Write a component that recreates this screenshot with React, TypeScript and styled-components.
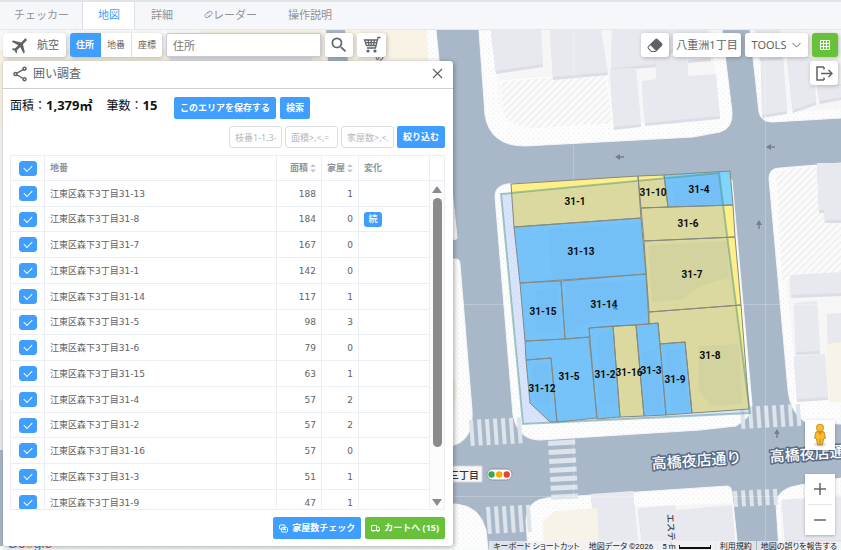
import React from "react";
import styled, { createGlobalStyle, css } from "styled-components";
import { MdFlight, MdSearch, MdOutlineShare } from "react-icons/md";
import { BsEraserFill } from "react-icons/bs";

const BLUE = "#409eff";
const GREEN = "#67c23a";
const LINE = "#ebeef5";

const GlobalStyle = createGlobalStyle`
  * { box-sizing: border-box; }
  html, body, #root { height: 100%; }
  body {
    margin: 0;
    overflow: hidden;
    font-family: "Noto Sans", "Noto Sans CJK JP", sans-serif;
    color: #606266;
  }
  button, input { font-family: inherit; margin: 0; }
`;

const Page = styled.div`
  height: 100%;
  display: flex;
  flex-direction: column;
`;

const Tabs = styled.nav`
  display: flex;
  flex: none;
  height: 30px;
  background: #f5f7fa;
  border-top: 2px solid #e1e4e9;
  border-bottom: 1px solid #e4e7ed;
`;

const Tab = styled.button<{ $active?: boolean }>`
  display: flex;
  align-items: center;
  height: 27px;
  padding: 0 14px 2px 15px;
  border: 0 solid #dcdfe6;
  border-width: 0 1px;
  border-color: ${(p) => (p.$active ? "#dcdfe6" : "transparent")};
  background: ${(p) => (p.$active ? "#fff" : "transparent")};
  color: ${(p) => (p.$active ? BLUE : "#909399")};
  font-size: 11px;
  line-height: 16px;
  &:first-child { padding-left: 13px; padding-right: 12px; }
`;

const MapArea = styled.main`
  position: relative;
  flex: 1;
  min-height: 0;
  overflow: hidden;
  display: flex;
  flex-direction: column;
`;

const MapCanvas = styled.svg`
  position: absolute;
  inset: 0;
  width: 100%;
  height: 100%;
`;

const Toolbar = styled.div`
  position: relative;
  display: flex;
  align-items: flex-start;
  gap: 4px;
  padding: 3px 3px 4px;
`;

const Spacer = styled.div`
  flex: 1;
`;

const ToolButton = styled.button<{ $w: number; $green?: boolean }>`
  display: flex;
  align-items: center;
  justify-content: center;
  gap: 6px;
  flex: none;
  width: ${(p) => p.$w}px;
  height: 24px;
  padding: 0;
  border: 0;
  border-radius: 3px;
  background: ${(p) => (p.$green ? GREEN : "#fff")};
  color: #606266;
  font-size: 11px;
  line-height: 16px;
  white-space: nowrap;
  box-shadow: 1px 1px 4px rgba(0, 0, 0, 0.25);
`;

const Modes = styled.div`
  display: flex;
  flex: none;
  height: 24px;
  border-radius: 3px;
  overflow: hidden;
  background: #fff;
  box-shadow: 1px 1px 4px rgba(0, 0, 0, 0.25);
`;

const Mode = styled.label`
  display: flex;
  align-items: center;
  justify-content: center;
  width: 31px;
  border-right: 1px solid #dcdfe6;
  font-size: 9px;
  line-height: 12px;
  input { appearance: none; width: 0; height: 0; }
  &:last-child { width: 30px; border-right: 0; }
  &:has(input:checked) { background: ${BLUE}; color: #fff; font-weight: 700; border-color: ${BLUE}; }
`;

const SearchBox = styled.input`
  width: 155px;
  height: 24px;
  padding: 0 6px;
  border: 1px solid #c9ccd2;
  border-radius: 2px;
  background: #fff;
  font-size: 11px;
  outline: none;
  box-shadow: 1px 1px 4px rgba(0, 0, 0, 0.25);
  &::placeholder { color: #757575; }
`;

const Workspace = styled.div`
  position: relative;
  flex: 1;
  min-height: 0;
  display: flex;
  justify-content: space-between;
  padding: 0 3px 4px;
`;

const Panel = styled.section`
  display: flex;
  flex-direction: column;
  width: 450px;
  max-width: 90%;
  background: #fff;
  border-radius: 3px;
  box-shadow: 1px 1px 5px rgba(0, 0, 0, 0.35);
`;

const PanelHead = styled.header`
  display: flex;
  align-items: center;
  gap: 4px;
  flex: none;
  height: 28px;
  padding: 0 10px 2px 8px;
  border-bottom: 1px solid #cfcfcf;
`;

const PanelTitle = styled.h2`
  flex: 1;
  margin: 0;
  font-size: 12px;
  line-height: 18px;
  font-weight: 400;
`;

const IconButton = styled.button`
  display: flex;
  padding: 0;
  border: 0;
  background: none;
  color: #606266;
`;

const Summary = styled.div`
  display: flex;
  align-items: center;
  padding: 7px 7px 0;
  color: #111;
  gap: 4px;
`;

const Totals = styled.p`
  width: 160px;
  margin: 0;
  padding-bottom: 4px;
  display: flex;
  gap: 14px;
  font-size: 12px;
  line-height: 18px;
  white-space: nowrap;
  b { font-size: 13px; }
`;

const Action = styled.button<{ $green?: boolean }>`
  display: flex;
  align-items: center;
  justify-content: center;
  gap: 4px;
  flex: none;
  height: 22px;
  padding: 0 6px;
  border: 0;
  border-radius: 2px;
  background: ${(p) => (p.$green ? GREEN : BLUE)};
  color: #fff;
  font-size: 9px;
  line-height: 12px;
  font-weight: 700;
  white-space: nowrap;
`;

const Filters = styled.form`
  display: flex;
  justify-content: flex-end;
  gap: 3px;
  padding: 7px 8px;
`;

const FilterInput = styled.input`
  width: 53px;
  height: 22px;
  padding: 0 5px;
  border: 1px solid #dcdfe6;
  border-radius: 3px;
  font-size: 9px;
  outline: none;
  &::placeholder { color: #b4b8c0; }
`;

const TableFrame = styled.div`
  flex: 1;
  min-height: 0;
  display: flex;
  margin: 0 8px 0 7px;
  border: 1px solid ${LINE};
  overflow: hidden;
`;

const Table = styled.table`
  flex: 1;
  height: max-content;
  border-collapse: separate;
  border-spacing: 0;
  table-layout: fixed;
  font-family: "DejaVu Sans", "Noto Sans CJK JP", sans-serif;
  font-size: 9px;
  line-height: 12px;
  tr { height: 26px; }
  thead tr, tbody tr:nth-child(4n + 2) { height: 25px; }
`;

const cell = css<{ $right?: boolean }>`
  padding: 0 5px;
  border-right: 1px solid ${LINE};
  border-bottom: 1px solid ${LINE};
  text-align: ${(p) => (p.$right ? "right" : "left")};
  white-space: nowrap;
  overflow: hidden;
  vertical-align: middle;
`;

const Th = styled.th<{ $right?: boolean }>`
  ${cell}
  color: #909399;
  font-weight: 700;
  button {
    display: inline-flex;
    align-items: center;
    gap: 2px;
    padding: 0;
    border: 0;
    background: none;
    color: inherit;
    font-size: 9px;
    line-height: 12px;
    font-weight: 700;
  }
`;

const Td = styled.td<{ $right?: boolean }>`
  ${cell}
`;

const Tick = styled.input`
  appearance: none;
  display: grid;
  place-items: center;
  width: 18px;
  height: 15px;
  margin: 0 auto !important;
  border-radius: 3px;
  background: #fff;
  border: 1px solid #dcdfe6;
  &:checked { background: ${BLUE}; border-color: ${BLUE}; }
  &:checked::after {
    content: "";
    width: 7px;
    height: 4px;
    border: solid #fff;
    border-width: 0 0 1px 1px;
    transform: translateY(-1px) rotate(-45deg);
  }
`;

const Tag = styled.span`
  display: block;
  width: 18px;
  height: 15px;
  border-radius: 3px;
  background: ${BLUE};
  color: #fff;
  font-size: 9px;
  line-height: 14px;
  font-weight: 500;
  text-align: center;
`;

const ScrollBar = styled.div`
  flex: none;
  display: flex;
  flex-direction: column;
  align-items: center;
  width: 14px;
  padding-bottom: 3px;
  background: #fcfcfd;
`;

const ScrollCap = styled.div`
  width: 100%;
  height: 25px;
  background: #fff;
  border-bottom: 1px solid ${LINE};
`;

const ScrollArrow = styled.div<{ $down?: boolean }>`
  margin: 5px 0;
  border: solid transparent;
  border-width: 0 5px;
  ${(p) => (p.$down ? "border-top: 7px solid #8b8b8b; margin-bottom: 0;" : "border-bottom: 7px solid #8b8b8b;")}
`;

const ScrollTrack = styled.div`
  flex: 1;
  width: 9px;
`;

const ScrollThumb = styled.div`
  height: 84%;
  border-radius: 5px;
  background: #8b8b8b;
`;

const PanelFoot = styled.footer`
  display: flex;
  justify-content: flex-end;
  gap: 4px;
  padding: 7px 8px;
`;

const SideControls = styled.div`
  display: flex;
  flex-direction: column;
  align-items: flex-end;
  padding-bottom: 11px;
`;

const MapButton = styled.button`
  display: flex;
  align-items: center;
  justify-content: center;
  width: 30px;
  height: 30px;
  margin-right: 3px;
  padding: 0;
  border: 0;
  background: #fff;
  box-shadow: 0 1px 3px rgba(0, 0, 0, 0.25);
`;

const ZoomGroup = styled.div`
  margin: 24px 3px 0 0;
  background: #fff;
  box-shadow: 0 1px 3px rgba(0, 0, 0, 0.25);
  ${MapButton} { margin: 0; box-shadow: none; background: none; }
  hr { margin: 0 3px; border: 0; border-top: 1px solid #e6e6e6; }
`;

const Credits = styled.div`
  position: absolute;
  right: 0;
  bottom: 0;
  display: flex;
  gap: 1px;
  height: 9px;
  overflow: hidden;
  color: #222;
  font-family: Roboto, "Noto Sans CJK JP", sans-serif;
  font-size: 8px;
  line-height: 12px;
  font-feature-settings: "palt";
  white-space: nowrap;
`;

const Credit = styled.span`
  display: flex;
  gap: 3px;
  padding: 0 4px;
  background: rgba(240, 242, 245, 0.75);
  a, button { color: inherit; font: inherit; font-feature-settings: inherit; text-decoration: none; border: 0; padding: 0; background: none; }
`;

const ScaleLine = styled.i`
  width: 32px;
  height: 4px;
  margin: 4px 0 0;
  border: solid #111;
  border-width: 0 1px 2px;
`;

/* ---------- map ---------- */

type Parcel = { id: string; pts: string; x: number; y: number; yellow?: boolean };

const parcels: Parcel[] = [
  { id: "31-1", pts: "511,184 638,176 641,218 514,227", x: 575, y: 201, yellow: true },
  { id: "31-10", pts: "638,176 664,175 668,207 641,208", x: 653, y: 192, yellow: true },
  { id: "31-4", pts: "664,175 730,171 733,205 668,207", x: 699, y: 189 },
  { id: "31-6", pts: "641,208 733,205 735,237 644,241", x: 688, y: 223, yellow: true },
  { id: "31-13", pts: "514,227 641,218 646,274 520,283", x: 581, y: 251 },
  { id: "31-7", pts: "644,241 735,237 741,305 649,312", x: 692, y: 274, yellow: true },
  { id: "31-15", pts: "520,283 561,281 565,339 525,341", x: 543, y: 311 },
  { id: "31-14", pts: "561,281 646,274 649,324 589,328 590,337 565,339", x: 604, y: 304 },
  { id: "31-8", pts: "649,312 741,305 749,409 692,413 685,342 660,344 658,323 649,324", x: 710, y: 355, yellow: true },
  { id: "31-5", pts: "525,341 565,339 589,337 597,418 557,422 551,358 526,360", x: 569, y: 376 },
  { id: "31-12", pts: "526,360 551,358 557,422 550,422 530,403", x: 542, y: 388 },
  { id: "31-2", pts: "589,328 613,326 620,417 597,419", x: 605, y: 374 },
  { id: "31-16", pts: "613,326 636,325 644,416 620,417", x: 629, y: 372, yellow: true },
  { id: "31-3", pts: "636,325 658,323 666,415 644,416", x: 651, y: 370 },
  { id: "31-9", pts: "660,344 685,342 692,413 666,415", x: 675, y: 379 },
];

const blocks = [
  "M0 30H436L457 238Q457 240 450 240H0Z",
  "M0 259H456Q460 259 460 264L472 410Q474 442 450 446H0Z",
  "M0 504H456Q480 506 486 530L488 550H0Z",
  "M479 30L485 115Q490 146 525 146L693 137L720 132Q733 128 732 112L722 30Z",
  "M750 30L759 112Q761 122 772 122L841 118V30Z",
  "M495 196Q495 186 507 184L725 175L732 180L752 405Q752 417 736 426L700 430L540 440Q518 440 513 415Z",
  "M769 178Q769 168 780 168L841 163V424L805 422Q790 412 788 390Z",
  "M528 550L526 520Q527 500 547 498L728 486Q731 486 732 492L738 550Z",
  "M779 550L776 504Q777 488 800 485L841 478V550Z",
];

const lots = [
  "M494 30L500 105Q505 128 530 129L715 118L719 110L711 30Z",
  "M757 30L764 113L841 109V30Z",
  "M776 172L841 167V400L798 400Z",
  "M597 508L732 503L736 550H597Z",
  "M782 550L780 500L841 493V550Z",
];

const buildings = [
  "491,30 541,30 543,64 496,71",
  "550,30 601,30 608,72 553,77",
  "612,30 693,30 657,64 611,68",
  "610,69 636,68 641,124 614,127",
  "655,56 687,55 688,76 716,74 720,116 645,123 642,81 657,79",
  "687,30 708,30 711,58 688,60",
  "761,55 783,55 787,111 762,115",
  "755,30 780,30 783,57 760,58",
  "787,57 813,57 816,102 793,110",
  "817,84 841,84 841,97 820,101",
  "817,163 841,163 841,220 825,220 824,210 819,210",
  "790,275 841,272 841,293 791,295",
  "794,303 817,301 820,351 796,352",
  "827,314 841,313 841,343 828,343",
  "794,356 825,354 828,397 797,399",
  "591,494 633,491 639,550 597,550",
  "638,508 675,505 676,510 732,505 736,550 643,550",
  "782,500 841,496 841,540 785,540",
  "170,57 312,57 312,90 170,90",
];

const innerBuildings = [
  "549,229 640,223 645,272 552,286",
  "536,290 558,288 560,331 537,332",
  "590,322 648,319 648,280 566,284 565,334",
  "648,245 727,241 729,278 703,285 682,300 652,302",
  "698,346 739,344 742,404 712,406 699,392",
  "598,334 612,330 617,404 599,405",
  "665,351 680,350 690,410 672,412",
  "642,352 656,350 664,412 646,413",
  "672,182 720,175 722,203 674,206",
  "532,366 548,364 550,408 534,400",
];

function zebra(x: number, y: number, n: number, step: number, w: number, h: number, slope: number) {
  return Array.from({ length: n }, (_, i) => (
    <rect key={`${x}-${y}-${i}`} x={x + i * step} y={y + i * slope} width={w} height={h} transform={`rotate(-4 ${x + i * step} ${y})`} />
  ));
}

const arrows: [number, number, number][] = [
  [620, 157, 180],
  [771, 147, 180],
  [759, 225, -90],
  [777, 434, -90],
];

const GoogleLetters: [string, string][] = [
  ["G", "#4285f4"], ["o", "#ea4335"], ["o", "#fbbc05"], ["g", "#4285f4"], ["l", "#34a853"], ["e", "#ea4335"],
];

function CityMap() {
  return (
    <MapCanvas viewBox="0 30 841 520" preserveAspectRatio="xMidYMid slice" role="img" aria-label="地図">
      <defs>
        <pattern id="dots" width="5" height="5" patternUnits="userSpaceOnUse">
          <rect width="5" height="5" fill="#fdfdfd" />
          <circle cx="1" cy="1" r="0.6" fill="#e3e9ea" />
          <circle cx="3.5" cy="3.5" r="0.6" fill="#e3e9ea" />
        </pattern>
        <pattern id="hatch" width="5" height="5" patternUnits="userSpaceOnUse" patternTransform="rotate(45)">
          <rect width="5" height="5" fill="#fbfbfb" />
          <rect width="1.5" height="5" fill="#ededed" />
        </pattern>
      </defs>
      <rect x="0" y="30" width="841" height="520" fill="#a9b8c9" />
      {blocks.map((d) => <path key={d} d={d} fill="url(#dots)" stroke="#f4f6f7" strokeWidth="1" />)}
      {lots.map((d) => <path key={d} d={d} fill="#f6f6f6" />)}
      <path d="M0 50H200V30H427L429 75H453V125H0Z" fill="#f9f3e6" />
      <path d="M0 125H3V400H0Z" fill="#f5f5f5" />
      <path d="M0 400H3V450H0Z" fill="#e8e9ef" />
      <path d="M0 480H3V546H0Z" fill="#a9b8c9" />
      <path d="M326 30H345L348 62H328Z" fill="#a9b8c9" />
      <path d="M453 375L457 390L453 415Z" fill="#f9f3e6" />
      <path d="M500 81L606 73L613 124L530 129Q503 125 502 108Z" fill="url(#hatch)" stroke="#fff" />
      <path d="M776 172L816 165L819 212L824 222L841 222V272L782 281Z" fill="url(#hatch)" />
      {buildings.map((p) => (
        <g key={p}>
          <polygon points={p} fill="#dcdee7" transform="translate(0 3)" />
          <polygon points={p} fill="#e8e9ef" />
        </g>
      ))}
      <polygon points="542,522 555,511 597,508 599,550 545,550" fill="#f8f3e8" />
      <polygon points="826,344 841,342 841,402 829,402" fill="#f8f3e8" />
      <g fill="#dde4ec">
        {zebra(469, 420, 7, 8, 4, 26, -0.4)}
        {zebra(740, 407, 8, 8, 4, 22, -0.4)}
        {zebra(486, 507, 6, 8, 4, 27, -0.4)}
        {zebra(733, 491, 6, 8, 4, 16, -0.4)}
        {Array.from({ length: 7 }, (_, i) => (
          <rect key={i} x={548 + i * 0.5} y={441 + i * 9} width="27" height="5" transform={`rotate(-3 ${548} ${441 + i * 9})`} />
        ))}
      </g>
      <path d="M573.500 30V550M765.500 30V550M450 304.500H841M450 496.500H841" stroke="#fff" strokeOpacity="0.22" />

      {parcels.map((p) => (
        <polygon key={p.id} points={p.pts} fill={p.yellow ? "#ffee85" : "#7dd3fb"} fillOpacity="0.97" />
      ))}
      {innerBuildings.map((p) => <polygon key={p} points={p} fill="#4f7fa0" fillOpacity="0.05" />)}
      <polygon points="501,194 719,173 750,413 523,424" fill="#4a82f8" fillOpacity="0.2" />
      <polygon points="501,194 719,173 750,413 523,424" fill="none" stroke="#3f8f7f" strokeOpacity="0.45" strokeWidth="2" />
      {parcels.map((p) => (
        <polygon key={p.id} points={p.pts} fill="none" stroke="#85897f" strokeWidth="1" />
      ))}
      <g fontFamily="Roboto, sans-serif" fontWeight="700" fontSize="10" fill="#0b0b0b" textAnchor="middle">
        {parcels.map((p) => <text key={p.id} x={p.x} y={p.y + 4}>{p.id}</text>)}
      </g>
      <path d="M614 304V309H618M614 307H617" stroke="#2b7fc0" fill="none" />

      {arrows.map(([x, y, r]) => (
        <g key={`${x}-${y}`} transform={`translate(${x} ${y}) rotate(${r})`}>
          <path d="M-4 0H2" stroke="#75808e" strokeWidth="1.500" />
          <path d="M0 -3L5 0L0 3Z" fill="#75808e" />
        </g>
      ))}

      <g fontFamily="'Noto Sans CJK JP', sans-serif" fontSize="15" fontWeight="500" fill="#fff" stroke="#566a86" strokeWidth="3" strokeLinejoin="round" style={{ paintOrder: "stroke" }}>
        <text x="652" y="469" transform="rotate(-4 652 469)">高橋夜店通り</text>
        <text x="770" y="462" transform="rotate(-4 770 462)">高橋夜店通り</text>
      </g>
      <rect x="420" y="466" width="62" height="16" fill="#f7f7f7" stroke="#d5d8dc" />
      <text x="479" y="479" textAnchor="end" fontFamily="'Noto Sans CJK JP', sans-serif" fontSize="10" fontWeight="500" fill="#333">三丁目</text>
      <rect x="487" y="469" width="25" height="11" rx="5.500" fill="#fff" stroke="#8c8f94" />
      <circle cx="491.500" cy="474.500" r="3.200" fill="#34a853" />
      <circle cx="499.200" cy="474.500" r="3.200" fill="#f9ab00" />
      <circle cx="506.800" cy="474.500" r="3.200" fill="#ea4335" />
      <text x="667" y="514" transform="rotate(87 667 514)" fontFamily="'Noto Sans CJK JP', sans-serif" fontSize="9" fontWeight="500" fill="#444">エスティ</text>
      <text x="375" y="60" fontFamily="'Noto Sans CJK JP', sans-serif" fontSize="9" fill="#444">の</text>
      <text x="7" y="548" fontFamily="'Liberation Sans', sans-serif" fontSize="14" stroke="#fff" strokeWidth="2" style={{ paintOrder: "stroke" }}>
        {GoogleLetters.map(([c, f], i) => <tspan key={i} fill={f}>{c}</tspan>)}
      </text>
    </MapCanvas>
  );
}

/* ---------- icons ---------- */

const LinkIcon = () => (
  <svg width="9" height="9" viewBox="0 0 18 18" fill="none" stroke="currentColor" strokeWidth="1.800" strokeLinecap="round" aria-hidden>
    <path d="M6 7L9 3.500Q12 1 15 3.500Q17.500 6.500 15 9.500L12 12.500Q9.500 14 7.500 12" />
    <path d="M12 10.500L9 14Q6 17 3 14.500Q.5 11.500 3 8.500L6 5.500Q8.500 4 10.500 6" />
  </svg>
);

const CartIcon = () => (
  <svg width="18" height="18" viewBox="0 0 18 18" fill="none" stroke="#606266" strokeWidth="1.300" aria-hidden>
    <path d="M17.500 1.500H15L12.500 12H4M14.300 4H1.500L3.500 9.500H13M5 4L6 9.500M8.200 4V9.500M11.400 4L10.500 9.500M2.500 6.700H13.600" />
    <circle cx="5" cy="15" r="1.600" fill="#606266" stroke="none" />
    <circle cx="12" cy="15" r="1.600" fill="#606266" stroke="none" />
  </svg>
);

const ChevronIcon = () => (
  <svg width="9" height="6" viewBox="0 0 9 6" fill="none" stroke="#606266" aria-hidden><path d="M.5 1L4.500 5L8.500 1" /></svg>
);

const GridIcon = () => (
  <svg width="10" height="10" viewBox="0 0 10 10" fill="none" stroke="#fff" aria-hidden>
    <path d="M.5 .5H9.500V9.500H.5ZM3.500 .5V9.500M6.500 .5V9.500M.5 3.500H9.500M.5 6.500H9.500" />
  </svg>
);

const ExitIcon = () => (
  <svg width="17" height="15" viewBox="0 0 17 15" fill="none" stroke="#606266" strokeWidth="1.500" aria-hidden>
    <path d="M8 1H1V14H8M8 11.500V14M8 1V3.500M5 7.500H16M12.500 4L16 7.500L12.500 11" />
  </svg>
);

const CloseIcon = () => (
  <svg width="11" height="11" viewBox="0 0 11 11" fill="none" stroke="currentColor" strokeWidth="1.200" aria-hidden>
    <path d="M1 1L10 10M10 1L1 10" />
  </svg>
);

const SortIcon = () => (
  <svg width="6" height="10" viewBox="0 0 6 10" fill="#c0c4cc" aria-hidden><path d="M0 4L3 1L6 4ZM0 6.500L3 9.500L6 6.500Z" /></svg>
);

const CopyIcon = () => (
  <svg width="9" height="9" viewBox="0 0 9 9" fill="none" stroke="#fff" aria-hidden>
    <rect x=".5" y="1" width="5.500" height="4" rx="1" />
    <rect x="2.500" y="3.500" width="6" height="4.500" rx="1" />
    <path d="M4 5.500H7" />
  </svg>
);

const TruckIcon = () => (
  <svg width="9" height="9" viewBox="0 0 9 9" fill="none" stroke="#fff" aria-hidden>
    <path d="M.5 1.500H5.500V6.500H.5ZM5.500 3H7.500L8.500 4.500V6.500H5.500" />
    <circle cx="2.500" cy="7" r="1" fill="#fff" stroke="none" />
    <circle cx="6.800" cy="7" r="1" fill="#fff" stroke="none" />
  </svg>
);

const PegmanIcon = () => (
  <svg width="14" height="24" viewBox="0 0 14 24" aria-hidden>
    <ellipse cx="7" cy="21.500" rx="6" ry="2" fill="#e3e3e3" />
    <path d="M3 9Q7 7 11 9L12.500 15L10.500 16L9.500 22H4.500L3.500 16L1.500 15Z" fill="#fbbc2c" stroke="#a37820" strokeWidth="0.800" />
    <path d="M4.500 8.500L7 12L9.500 8.500Z" fill="#f0801a" />
    <path d="M7 16V22" stroke="#a37820" strokeWidth="0.800" />
    <circle cx="7" cy="4.800" r="3.700" fill="#fbbc2c" stroke="#c48f1c" strokeWidth="0.800" />
  </svg>
);

const PlusMinus = ({ plus }: { plus?: boolean }) => (
  <svg width="12" height="12" viewBox="0 0 12 12" stroke="#666" strokeWidth="1.500" aria-hidden>
    <path d={plus ? "M0 6H12M6 0V12" : "M0 6H12"} />
  </svg>
);

/* ---------- data ---------- */

const rows: [string, number, number, string?][] = [
  ["13", 188, 1], ["8", 184, 0, "続"], ["7", 167, 0], ["1", 142, 0], ["14", 117, 1], ["5", 98, 3], ["6", 79, 0],
  ["15", 63, 1], ["4", 57, 2], ["2", 57, 2], ["16", 57, 0], ["3", 51, 1], ["9", 47, 1],
];

export default function App() {
  return (
    <Page>
      <GlobalStyle />
      <Tabs>
        <Tab>チェッカー</Tab>
        <Tab $active aria-current="page">地図</Tab>
        <Tab>詳細</Tab>
        <Tab><LinkIcon />レーダー</Tab>
        <Tab>操作説明</Tab>
      </Tabs>
      <MapArea>
        <CityMap />
        <Toolbar>
          <ToolButton $w={63}><MdFlight size={21} transform="rotate(45)" />航空</ToolButton>
          <Modes role="radiogroup" aria-label="検索対象">
            {["住所", "地番", "座標"].map((m, i) => (
              <Mode key={m}><input type="radio" name="mode" defaultChecked={i === 0} />{m}</Mode>
            ))}
          </Modes>
          <SearchBox placeholder="住所" aria-label="住所" />
          <ToolButton $w={28} aria-label="検索"><MdSearch size={20} /></ToolButton>
          <ToolButton $w={29} aria-label="カート"><CartIcon /></ToolButton>
          <Spacer />
          <ToolButton $w={28} aria-label="消去"><BsEraserFill size={16} /></ToolButton>
          <ToolButton $w={68}>八重洲1丁目</ToolButton>
          <ToolButton $w={63}>TOOLS<ChevronIcon /></ToolButton>
          <ToolButton $w={26} $green aria-label="建物"><GridIcon /></ToolButton>
        </Toolbar>
        <Workspace>
          <Panel>
            <PanelHead>
              <MdOutlineShare size={18} />
              <PanelTitle>囲い調査</PanelTitle>
              <IconButton aria-label="閉じる"><CloseIcon /></IconButton>
            </PanelHead>
            <Summary>
              <Totals>
                <span>面積：<b>1,379㎡</b></span>
                <span>筆数：<b>15</b></span>
              </Totals>
              <Action>このエリアを保存する</Action>
              <Action>検索</Action>
            </Summary>
            <Filters onSubmit={(e) => e.preventDefault()}>
              <FilterInput placeholder="枝番1-1,3-" aria-label="枝番" />
              <FilterInput placeholder="面積>,<,=" aria-label="面積" />
              <FilterInput placeholder="家屋数>,<," aria-label="家屋数" />
              <Action>絞り込む</Action>
            </Filters>
            <TableFrame>
              <Table>
                <colgroup>
                  <col width="34" /><col /><col width="45" /><col width="37" /><col width="71" />
                </colgroup>
                <thead>
                  <tr>
                    <Th><Tick type="checkbox" defaultChecked aria-label="すべて選択" /></Th>
                    <Th>地番</Th>
                    <Th $right><button>面積<SortIcon /></button></Th>
                    <Th $right><button>家屋<SortIcon /></button></Th>
                    <Th>変化</Th>
                  </tr>
                </thead>
                <tbody>
                  {rows.map(([no, area, houses, change]) => (
                    <tr key={no}>
                      <Td><Tick type="checkbox" defaultChecked aria-label={`31-${no}`} /></Td>
                      <Td>{`江東区森下3丁目31-${no}`}</Td>
                      <Td $right>{area}</Td>
                      <Td $right>{houses}</Td>
                      <Td>{change && <Tag>{change}</Tag>}</Td>
                    </tr>
                  ))}
                </tbody>
              </Table>
              <ScrollBar aria-hidden>
                <ScrollCap />
                <ScrollArrow />
                <ScrollTrack><ScrollThumb /></ScrollTrack>
                <ScrollArrow $down />
              </ScrollBar>
            </TableFrame>
            <PanelFoot>
              <Action><CopyIcon />家屋数チェック</Action>
              <Action $green><TruckIcon />カートへ (15)</Action>
            </PanelFoot>
          </Panel>
          <SideControls>
            <ToolButton $w={28} aria-label="退出"><ExitIcon /></ToolButton>
            <Spacer />
            <MapButton aria-label="ストリートビュー"><PegmanIcon /></MapButton>
            <ZoomGroup>
              <MapButton aria-label="拡大"><PlusMinus plus /></MapButton>
              <hr />
              <MapButton aria-label="縮小"><PlusMinus /></MapButton>
            </ZoomGroup>
          </SideControls>
        </Workspace>
        <Credits>
          <Credit><button>キーボード ショートカット</button></Credit>
          <Credit>地図データ ©2026</Credit>
          <Credit>5 m<ScaleLine /></Credit>
          <Credit><a href="#terms">利用規約</a></Credit>
          <Credit><a href="#report">地図の誤りを報告する</a></Credit>
        </Credits>
      </MapArea>
    </Page>
  );
}
